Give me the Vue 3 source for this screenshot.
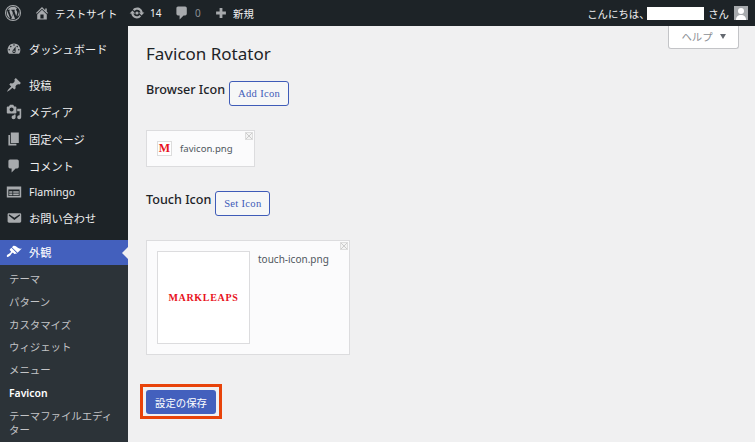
<script setup>
const icons = {
  dash: 'M3.76 16h12.48c1.1-1.37 1.76-3.11 1.76-5 0-4.42-3.58-8-8-8s-8 3.58-8 8c0 1.89.66 3.63 1.76 5zM10 4c.55 0 1 .45 1 1s-.45 1-1 1-1-.45-1-1 .45-1 1-1zM6 6c.55 0 1 .45 1 1s-.45 1-1 1-1-.45-1-1 .45-1 1-1zm8 0c.55 0 1 .45 1 1s-.45 1-1 1-1-.45-1-1 .45-1 1-1zm-5.37 5.55L12 7v6c0 1.1-.9 2-2 2s-2-.9-2-2c0-.57.24-1.08.63-1.45zM4 10c.55 0 1 .45 1 1s-.45 1-1 1-1-.45-1-1 .45-1 1-1zm12 0c.55 0 1 .45 1 1s-.45 1-1 1-1-.45-1-1 .45-1 1-1zm-5 3c0-.55-.45-1-1-1s-1 .45-1 1 .45 1 1 1 1-.45 1-1z',
  post: 'M10.44 3.02l1.82-1.82 6.36 6.35-1.83 1.82c-1.05-.68-2.48-.57-3.41.36l-.75.75c-.92.93-1.04 2.35-.35 3.41l-1.83 1.82-2.41-2.41-2.8 2.79c-.42.42-3.38 2.71-3.8 2.29s1.86-3.39 2.28-3.81l2.79-2.79L4.1 9.36l1.83-1.82c1.05.69 2.48.57 3.4-.36l.75-.75c.93-.92 1.05-2.35.36-3.41z',
  media: 'M13 11V4c0-.55-.45-1-1-1h-1.67L9 1H5L3.67 3H2c-.55 0-1 .45-1 1v7c0 .55.45 1 1 1h10c.55 0 1-.45 1-1zM7 4.5c1.38 0 2.5 1.12 2.5 2.5S8.38 9.5 7 9.5 4.5 8.38 4.5 7 5.62 4.5 7 4.5zM14 6h5v10.5c0 1.38-1.12 2.5-2.5 2.5S14 17.88 14 16.5s1.12-2.5 2.5-2.5c.17 0 .34.02.5.05V9h-3V6zm-4 8.05V13h2v3.5c0 1.38-1.12 2.5-2.5 2.5S7 17.88 7 16.5 8.12 14 9.5 14c.17 0 .34.02.5.05z',
  page: 'M6 15V2h10v13H6zm-1 1h8v2H3V5h2v11z',
  comment: 'M5 2h9c1.1 0 2 .9 2 2v7c0 1.1-.9 2-2 2h-2l-5 5v-5H5c-1.1 0-2-.9-2-2V4c0-1.1.9-2 2-2z',
  flamingo: 'M1 3h18v14H1V3zm2 4v8h14V7H3zm1 2h4v2H4V9zm5 0h7v2H9V9zm-5 3h4v2H4v-2zm5 0h7v2H9v-2z',
  mail: 'M3.87 4h13.25C18.37 4 19 4.59 19 5.79v8.42c0 1.19-.63 1.79-1.88 1.79H3.87c-1.25 0-1.88-.6-1.88-1.79V5.79c0-1.2.63-1.79 1.88-1.79zm6.62 8.6l6.74-5.53c.24-.2.43-.66.13-1.07-.29-.41-.82-.42-1.17-.17l-5.7 3.86L4.8 5.83c-.35-.25-.88-.24-1.17.17-.3.41-.11.87.13 1.07z',
  brush: 'M14.48 11.06L7.41 3.99l1.5-1.5c.5-.56 2.3-.47 3.51.32 1.21.8 1.43 1.28 2.91 2.1 1.18.64 2.45 1.26 4.45.85zm-.71.71L6.7 4.7 4.93 6.47c-.39.39-.39 1.02 0 1.41l1.06 1.06c.39.39.39 1.03 0 1.42-.6.6-1.43 1.11-2.21 1.69-.35.26-.7.53-1.01.84C1.43 13.23.4 14.89 1.3 15.8c.9.9 2.53-.14 3.88-1.48.3-.3.56-.65.81-1 .58-.78 1.1-1.6 1.69-2.2.39-.39 1.03-.39 1.42 0l1.06 1.06c.39.39 1.02.39 1.41 0z',
  home: 'M16 8.5l1.53 1.53-1.06 1.06L10 4.62l-6.47 6.47-1.06-1.06L10 2.5l4 4v-2h2v4zm-6-2.46l6 5.99V18H4v-5.97zM12 17v-5H8v5h4z',
  update: 'M10.2 3.28c3.53 0 6.43 2.61 6.92 6h2.08l-3.5 4-3.5-4h2.32c-.45-1.97-2.21-3.45-4.32-3.45-1.45 0-2.73.71-3.54 1.78L4.95 5.66C6.23 4.2 8.11 3.28 10.2 3.28zm-.4 13.44c-3.52 0-6.43-2.61-6.92-6H.8l3.5-4c1.17 1.33 2.33 2.67 3.5 4H5.48c.45 1.97 2.21 3.45 4.32 3.45 1.45 0 2.73-.71 3.54-1.78l1.71 1.95c-1.28 1.46-3.15 2.38-5.25 2.38zM10 8a2 2 0 1 1 0 4 2 2 0 0 1 0-4z',
  plus: 'M17 8v4h-5v5H8v-5H3V8h5V3h4v5h5z',
  logo: 'M10 1.2a8.800 8.800 0 1 0 0 17.600 8.800 8.800 0 0 0 0-17.600zM10 0a10 10 0 1 1 0 20 10 10 0 0 1 0-20zM8 15.300L5.100 6.900l1-.1c.4-.1.4-1-.1-1 0 0-1.300.1-2.100.1h-.5C4.800 3.700 7.200 2.300 10 2.300c2.100 0 4 .8 5.400 2.100-.7-.1-1.500.4-1.500 1.400 0 .6.4 1.200.8 1.800.3.5.5 1.200.5 2.100 0 1.300-1.200 4.300-1.200 4.300L11.500 7c.5 0 .7-.2.7-.2.4 0 .4-1-.1-1 0 0-1.300.1-2.100.1-.8 0-2.100-.1-2.100-.1-.4 0-.5 1-.1 1 0 0 .4.1.9.1l1.200 3.400zM17 9.900c.2-.6.4-1.100.4-1.600v-.4c.4.7.6 1.500.6 2.300 0 1.800-1 3.400-2.400 4.200zM10.100 10.900l2.500 6.400c-.8.3-1.700.4-2.600.4-.8 0-1.500-.1-2.200-.3zM2.700 6.900l3.700 10C3.800 15.600 2.200 13 2.200 10c0-1.100.2-2.200.5-3.100z'
}
const items = [
  { k: 'post', t: '投稿', icon: 'post' },
  { k: 'media', t: 'メディア', icon: 'media' },
  { k: 'page', t: '固定ページ', icon: 'page' },
  { k: 'comment', t: 'コメント', icon: 'comment' },
  { k: 'flamingo', t: 'Flamingo', icon: 'flamingo', cls: 'short' },
  { k: 'mail', t: 'お問い合わせ', icon: 'mail' }
]
const subs = ['テーマ', 'パターン', 'カスタマイズ', 'ウィジェット', 'メニュー']
</script>

<template>
  <div class="page">
    <header class="bar">
      <svg class="logo" viewBox="0 0 20 20"><path :d="icons.logo" /></svg>
      <svg class="bi home" viewBox="0 0 20 20"><path :d="icons.home" /></svg>
      <span class="site">テストサイト</span>
      <svg class="bi upd" viewBox="0 0 20 20"><path :d="icons.update" /></svg>
      <span class="count">14</span>
      <svg class="bi cmt" viewBox="0 0 20 20"><path :d="icons.comment" /></svg>
      <span class="zero">0</span>
      <svg class="bi pls" viewBox="0 0 20 20"><path :d="icons.plus" /></svg>
      <span class="new">新規</span>
      <span class="hello">こんにちは、</span>
      <span class="redact"></span>
      <span class="san">さん</span>
      <span class="avatar">
        <svg viewBox="0 0 14 14"><circle cx="7" cy="5" r="3" fill="#fff" /><path d="M2 14c0-3.500 2-5 5-5s5 1.500 5 5z" fill="#fff" /></svg>
      </span>
    </header>

    <div class="body">
      <nav class="side">
        <a class="item dash">
          <svg class="mi" viewBox="0 0 20 20"><path :d="icons.dash" fill-rule="evenodd" /></svg>
          <span>ダッシュボード</span>
        </a>
        <div class="group">
          <a v-for="it in items" :key="it.k" class="item" :class="it.cls">
            <svg class="mi" viewBox="0 0 20 20"><path :d="icons[it.icon]" fill-rule="evenodd" /></svg>
            <span>{{ it.t }}</span>
          </a>
        </div>
        <a class="item active">
          <svg class="mi" viewBox="0 0 20 20"><path :d="icons.brush" /></svg>
          <span>外観</span>
          <i class="arrow"></i>
        </a>
        <div class="sub">
          <a v-for="s in subs" :key="s" class="si">{{ s }}</a>
          <a class="si cur">Favicon</a>
          <a class="si wrap">テーマファイルエディター</a>
        </div>
      </nav>

      <main class="main">
        <div class="help">ヘルプ<i class="tri"></i></div>
        <h1>Favicon Rotator</h1>

        <section class="row first">
          <h2>Browser Icon</h2>
          <button class="btn add">Add Icon</button>
        </section>
        <div class="card small">
          <span class="x"></span>
          <span class="fav">M</span>
          <span class="fname">favicon.png</span>
        </div>

        <section class="row second">
          <h2>Touch Icon</h2>
          <button class="btn set">Set Icon</button>
        </section>
        <div class="card large">
          <span class="x"></span>
          <div class="thumb"><span>MARKLEAPS</span></div>
          <span class="tname">touch-icon.png</span>
        </div>

        <div class="mark"><button class="save">設定の保存</button></div>
      </main>
    </div>
  </div>
</template>

<style>
html, body { margin: 0; background: #f0f0f1; overflow: hidden; }
</style>

<style scoped>
.page {
  width: 755px;
  height: 442px;
  overflow: hidden;
  font-family: "Noto Sans", "Noto Sans CJK JP", sans-serif;
  background: #f0f0f1;
}
.bar {
  height: 26px;
  background: #1d2327;
  display: flex;
  align-items: center;
  color: #f0f0f1;
  font-size: 10.4px;
  font-family: "Noto Sans CJK JP", sans-serif;
}
.bar svg { fill: #a7aaad; flex: none; }
.logo { width: 16px; height: 16px; margin-left: 5px; }
.bi { width: 16px; height: 16px; }
.home { margin-left: 13px; }
.site { margin-left: 5px; width: 62px; white-space: nowrap; }
.upd { margin-left: 12px; }
.count { margin-left: 5px; width: 12px; font-family: "Noto Sans", sans-serif; font-size: 10px; }
.cmt { margin-left: 12px; }
.zero { margin-left: 5px; width: 7px; color: #8c8f94; font-family: "Noto Sans", sans-serif; font-size: 10px; }
.pls { margin-left: 12px; width: 14px; height: 14px; }
.new { margin-left: 5px; }
.hello { margin-left: auto; width: 60px; white-space: nowrap; }
.redact { width: 57px; height: 13px; background: #fff; }
.san { margin-left: 4px; }
.avatar {
  width: 14px; height: 14px; margin: 0 7px 0 5px; background: #a7aaad;
  display: block; overflow: hidden;
}
.avatar svg { display: block; width: 14px; height: 14px; }

.body { display: flex; height: 416px; }
.side {
  width: 128px;
  flex: none;
  background: #1d2327;
  color: #f0f0f1;
  font-size: 11.2px;
  font-family: "Noto Sans CJK JP", sans-serif;
  padding-top: 9px;
  box-sizing: border-box;
}
.item {
  position: relative;
  display: flex;
  align-items: center;
  height: 27px;
  padding-left: 6px;
  white-space: nowrap;
}
.item span { margin-left: 7px; }
.mi { width: 16px; height: 16px; fill: #a7aaad; flex: none; }
.dash { height: 27px; margin-bottom: 9.5px; }
.short { height: 25px; font-family: "Noto Sans", sans-serif; font-size: 10.6px; }
.group { margin-bottom: 8px; }
.active {
  height: 25px;
  background: #4360bd;
  color: #fff;
}
.active .mi { fill: #fff; }
.arrow {
  position: absolute;
  right: 0;
  top: 7px;
  border: 6px solid transparent;
  border-left: 0;
  border-right-color: #f0f0f1;
}
.sub {
  background: #2c3338;
  padding: 3.6px 0 20px;
  color: #c3c4c7;
  font-size: 10.4px;
}
.si { display: block; padding-left: 9px; height: 22.8px; line-height: 22.8px; white-space: nowrap; }
.cur { color: #fff; font-weight: 600; font-family: "Noto Sans", sans-serif; }
.wrap {
  white-space: normal;
  line-height: 14px;
  height: auto;
  padding-top: 4px;
  padding-right: 8px;
}

.main {
  position: relative;
  flex: 1;
  padding-left: 18px;
  color: #1d2327;
}
.help {
  position: absolute;
  top: 0;
  right: 16px;
  width: 71px;
  height: 23px;
  padding-bottom: 2px;
  background: #fff;
  border: 1px solid #c3c4c7;
  border-top: 0;
  border-radius: 0 0 3px 3px;
  box-sizing: border-box;
  display: flex;
  align-items: center;
  justify-content: center;
  color: #8c8f94;
  font-size: 10.4px;
  font-family: "Noto Sans CJK JP", sans-serif;
}
.tri {
  margin-left: 7px;
  border: 3.5px solid transparent;
  border-bottom: 0;
  border-top: 5px solid #646970;
}
h1 {
  margin: 0;
  padding-top: 16px;
  height: 24px;
  line-height: 24px;
  font-size: 17px;
  font-weight: 400;
}
.row { display: flex; align-items: flex-start; }
.first { margin-top: 15px; height: 25px; }
.second { margin-top: 24px; height: 25px; }
h2 {
  margin: 0;
  font-size: 12.6px;
  font-weight: 500;
  line-height: 17px;
}
.btn {
  height: 25px;
  margin: 0 0 0 4px;
  padding: 0;
  border: 1px solid #3f5cb8;
  border-radius: 3px;
  background: #f6f7f7;
  color: #3f5cb8;
  font-family: "Liberation Serif", serif;
  font-size: 10.6px;
  letter-spacing: .3px;
}
.add { width: 60px; }
.set { width: 55px; }
.card {
  position: relative;
  background: #fbfbfc;
  border: 1px solid #dcdcde;
  box-sizing: border-box;
}
.small {
  width: 109px;
  height: 37px;
  margin-top: 24px;
  display: flex;
  align-items: center;
  padding-left: 10px;
}
.x {
  position: absolute;
  top: 1px;
  right: 1px;
  width: 8px;
  height: 8px;
  background:
    linear-gradient(45deg, transparent 45%, #ccc 45%, #ccc 55%, transparent 55%),
    linear-gradient(-45deg, transparent 45%, #ccc 45%, #ccc 55%, transparent 55%),
    #f3f3f3;
  border: 1px solid #ddd;
  box-sizing: border-box;
}
.fav {
  width: 15px;
  height: 15px;
  border: 1px solid #ddd;
  background: #fff;
  color: #e8121c;
  font: 700 12px/13px "Liberation Serif", serif;
  text-align: center;
  box-sizing: border-box;
  overflow: hidden;
}
.fname { margin-left: 8px; font-size: 9.6px; color: #50575e; }
.large {
  width: 204px;
  height: 115px;
  margin-top: 24px;
  padding: 10px;
  display: flex;
  align-items: flex-start;
}
.thumb {
  width: 93px;
  height: 93px;
  flex: none;
  background: #fff;
  border: 1px solid #dcdcde;
  box-sizing: border-box;
  display: flex;
  align-items: center;
  justify-content: center;
}
.thumb span {
  color: #e8121c;
  font: 700 10px "Liberation Serif", serif;
  letter-spacing: .7px;
  white-space: nowrap;
}
.tname { margin-left: 8px; padding-top: 1px; font-size: 10px; line-height: 14px; color: #50575e; }
.mark {
  width: 82px;
  height: 35px;
  margin: 29px 0 0 -6px;
  border: 3px solid #e8430a;
  box-sizing: border-box;
  display: flex;
  align-items: flex-start;
  justify-content: center;
  padding-top: 3px;
}
.save {
  width: 70px;
  height: 24px;
  flex: none;
  border: 0;
  border-radius: 3px;
  padding: 0;
  background: #4360bd;
  color: #fff;
  font: 10.4px "Noto Sans CJK JP", sans-serif;
}
</style>
